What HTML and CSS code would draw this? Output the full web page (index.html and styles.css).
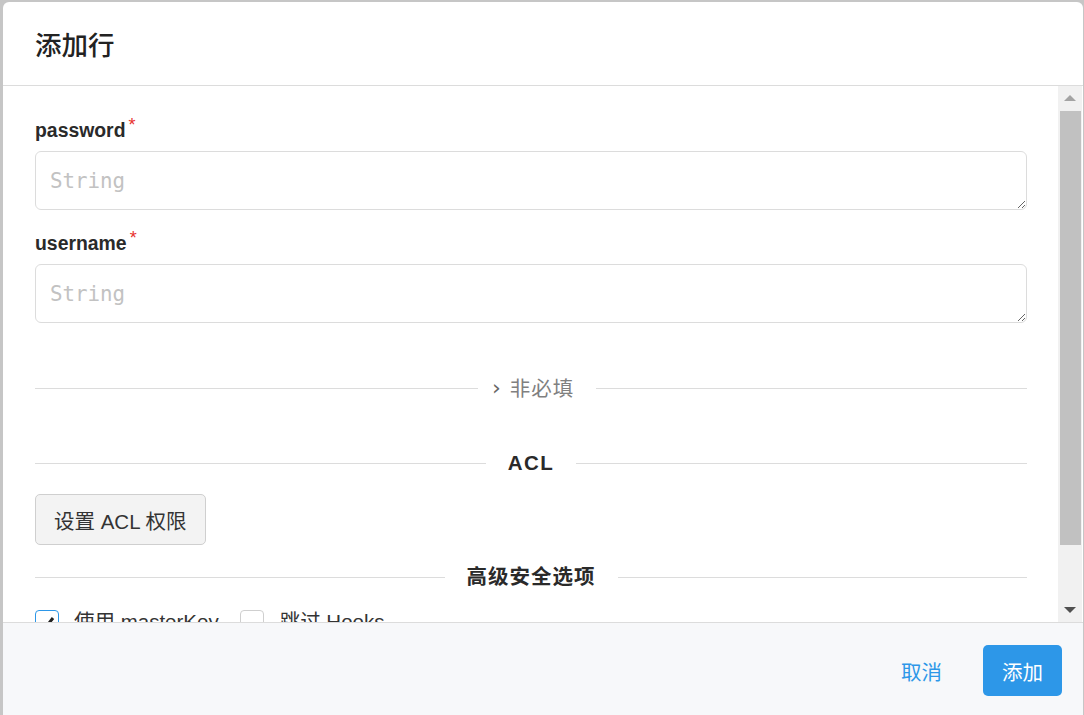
FILE: index.html
```html
<!DOCTYPE html>
<html lang="zh-CN">
<head>
<meta charset="utf-8">
<title>添加行</title>
<link rel="stylesheet" href="styles.css">
</head>
<body>
<div class="modal">
  <div class="modal-header">
    <h2 class="modal-title">添加行</h2>
  </div>
  <div class="modal-body">
    <div class="content">
      <div class="field">
        <label class="field-label">password<span class="req">*</span></label>
        <textarea class="input" placeholder="String"></textarea>
      </div>
      <div class="field">
        <label class="field-label">username<span class="req">*</span></label>
        <textarea class="input" placeholder="String"></textarea>
      </div>
      <div class="divider divider-opt">
        <span class="divider-text optional"><span class="chev">›</span>非必填</span>
      </div>
      <div class="divider divider-acl">
        <span class="divider-text strong latin">ACL</span>
      </div>
      <button class="btn-default">设置 ACL 权限</button>
      <div class="divider divider-sec">
        <span class="divider-text strong">高级安全选项</span>
      </div>
      <div class="checks">
        <span class="checkbox checked">
          <svg width="19" height="19" viewBox="0 0 19 19"><polyline points="4,10 8,14 15,5" fill="none" stroke="#222" stroke-width="3"/></svg>
        </span>
        <span class="check-label">使用 masterKey</span>
        <span class="checkbox second"></span>
        <span class="check-label">跳过 Hooks</span>
      </div>
    </div>
    <div class="scrollbar">
      <div class="sb-btn"><span class="arrow-up"></span></div>
      <div class="sb-thumb"></div>
      <div class="sb-space"></div>
      <div class="sb-btn"><span class="arrow-down"></span></div>
    </div>
  </div>
  <div class="modal-footer">
    <button class="btn-link">取消</button>
    <button class="btn-primary">添加</button>
  </div>
</div>
</body>
</html>
```

FILE: styles.css
```css
* { box-sizing: border-box; }

html, body {
  margin: 0;
  padding: 0;
  height: 100%;
  overflow: hidden;
}

body {
  background: #c6c6c6;
  font-family: "Liberation Sans", "Noto Sans CJK SC", sans-serif;
  color: #333;
  font-size: 20.5px;
}

.modal {
  margin: 2px 0 0 3px;
  width: 1080px;
  height: 713px;
  background: #fff;
  border-radius: 6px 6px 0 0;
  display: flex;
  flex-direction: column;
  overflow: hidden;
}

.modal-header {
  height: 84px;
  flex: 0 0 84px;
  border-bottom: 1px solid #dcdcdc;
  padding: 0 32px;
  display: flex;
  align-items: center;
}

.modal-title {
  margin: 0;
  font-size: 26.5px;
  font-weight: 500;
  color: #222;
  font-family: "Noto Sans CJK SC", "Liberation Sans", sans-serif;
}

.modal-body {
  height: 536px;
  flex: 0 0 536px;
  display: flex;
}

.content {
  flex: 1;
  padding: 33px 31px 0 32px;
  overflow: hidden;
}

.field { margin-bottom: 22px; }

.field-label {
  display: block;
  font-size: 19.4px;
  font-weight: bold;
  line-height: 22px;
  margin-bottom: 10px;
  color: #2a2a2a;
}

.req {
  color: #e8322e;
  font-size: 18px;
  font-weight: normal;
  vertical-align: top;
  position: relative;
  top: -5px;
  margin-left: 3px;
}

.input {
  display: block;
  width: 100%;
  height: 59px;
  border: 1px solid #dcdcdc;
  border-radius: 6px;
  padding: 15px 14px 13px;
  font-family: "DejaVu Sans Mono", monospace;
  font-size: 20.8px;
  line-height: 28px;
  resize: vertical;
  color: #333;
  outline: none;
}

.input::placeholder { color: #c2c2c2; }

.divider {
  display: flex;
  align-items: center;
  height: 30px;
}

.divider::before,
.divider::after {
  content: "";
  flex: 1;
  border-top: 1px solid #dcdcdc;
}

.divider-text {
  padding: 0 22px;
  line-height: 30px;
  white-space: nowrap;
}

.divider-opt { margin-top: 50px; }
.divider-opt::before { flex: 0 0 443px; }
.divider-opt .divider-text { padding: 0 22px 0 14px; }

.optional {
  color: #808080;
  font-size: 20.5px;
  letter-spacing: 1px;
  font-family: "Noto Sans CJK SC", sans-serif;
}

.chev {
  display: inline-block;
  font-size: 22px;
  margin-right: 8px;
  color: #666;
  font-family: "DejaVu Sans", sans-serif;
  position: relative;
  top: -1px;
}

.strong {
  font-weight: bold;
  font-size: 20.5px;
  color: #2a2a2a;
  letter-spacing: 1px;
}

.latin { letter-spacing: 1.5px; }

.divider-acl { margin-top: 45px; }

.btn-default {
  display: block;
  margin-top: 16px;
  height: 51px;
  padding: 0 18px;
  background: #f3f3f3;
  border: 1px solid #cfcfcf;
  border-radius: 5px;
  font-family: "Liberation Sans", "Noto Sans CJK SC", sans-serif;
  font-size: 20.5px;
  color: #333;
}

.divider-sec { margin-top: 17px; }

.checks {
  margin-top: 18px;
  display: flex;
  align-items: flex-start;
  line-height: 24px;
}

.checkbox {
  width: 24px;
  height: 24px;
  flex: 0 0 24px;
  border: 1px solid #cfcfcf;
  border-radius: 4px;
  display: flex;
  align-items: center;
  justify-content: center;
}

.checkbox.checked { border-color: #2d97e8; }
.checkbox.second { margin-left: 21px; }

.check-label {
  margin-left: 15px;
  font-size: 20.5px;
  color: #333;
}

.checkbox.second + .check-label { margin-left: 16px; }

.scrollbar {
  width: 24px;
  flex: 0 0 24px;
  background: #f1f1f1;
  display: flex;
  flex-direction: column;
  margin-right: 1px;
}

.sb-btn {
  height: 24px;
  flex: 0 0 24px;
  display: flex;
  align-items: center;
  justify-content: center;
}

.arrow-up {
  width: 0; height: 0;
  border-left: 6px solid transparent;
  border-right: 6px solid transparent;
  border-bottom: 6px solid #a3a3a3;
}

.arrow-down {
  width: 0; height: 0;
  border-left: 6px solid transparent;
  border-right: 6px solid transparent;
  border-top: 6px solid #505050;
}

.sb-thumb {
  height: 434px;
  flex: 0 0 434px;
  margin: 1px 1px 0 2px;
  background: #c1c1c1;
}

.sb-space { flex: 1; }

.modal-footer {
  flex: 1;
  background: #f7f8fa;
  border-top: 1px solid #dcdcdc;
  padding: 22px 21px 0;
  display: flex;
  justify-content: flex-end;
  align-items: flex-start;
  gap: 20px;
}

.btn-link,
.btn-primary {
  height: 51px;
  border: none;
  border-radius: 5px;
  font-family: "Liberation Sans", "Noto Sans CJK SC", sans-serif;
  font-size: 20.5px;
  padding: 0 18px;
}

.btn-link {
  background: transparent;
  color: #2d97e8;
  margin-right: 3px;
}

.btn-primary {
  background: #2d97e8;
  color: #fff;
  padding: 0 19px;
}
```
